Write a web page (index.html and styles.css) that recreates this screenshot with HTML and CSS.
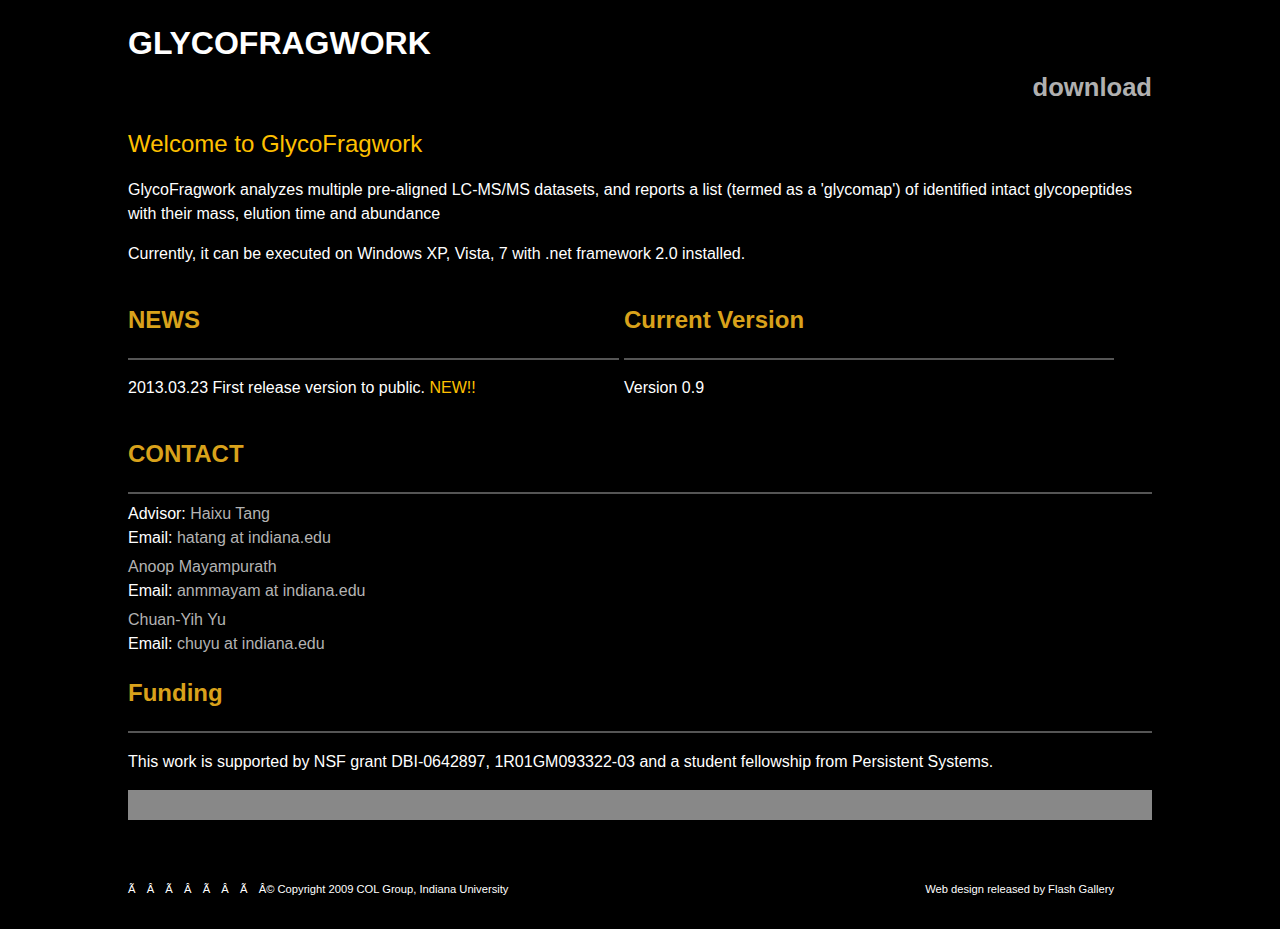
FILE: index.html
```html
<!DOCTYPE html>
<html>
<head>
<meta charset="utf-8">
<title>GlycoFragwork</title>
<link rel="stylesheet" href="styles.css">
</head>
<body>
<div class="page">
  <header class="header">
    <h1 class="site-title">GLYCOFRAGWORK</h1>
    <nav class="nav"><a class="nav-link" href="#">download</a></nav>
  </header>

  <section class="intro">
    <h2 class="welcome">Welcome to GlycoFragwork</h2>
    <p class="text intro-p">GlycoFragwork analyzes multiple pre-aligned LC-MS/MS datasets, and reports a list (termed as a 'glycomap') of identified intact glycopeptides with their mass, elution time and abundance</p>
    <p class="text intro-p">Currently, it can be executed on Windows XP, Vista, 7 with .net framework 2.0 installed.</p>
  </section>

  <div class="columns">
    <section class="col">
      <h3 class="sec-title">NEWS</h3>
      <hr class="rule">
      <p class="text col-p">2013.03.23 First release version to public. <span class="new">NEW!!</span></p>
    </section>
    <section class="col">
      <h3 class="sec-title">Current Version</h3>
      <hr class="rule">
      <p class="text col-p">Version 0.9</p>
    </section>
  </div>

  <section class="contact">
    <h3 class="sec-title">CONTACT</h3>
    <hr class="rule">
    <div class="people">
      <p class="text person">Advisor: <a class="link" href="#">Haixu Tang</a><br>Email: <a class="link" href="#">hatang at indiana.edu</a></p>
      <p class="text person"><a class="link" href="#">Anoop Mayampurath</a><br>Email: <a class="link" href="#">anmmayam at indiana.edu</a></p>
      <p class="text person"><a class="link" href="#">Chuan-Yih Yu</a><br>Email: <a class="link" href="#">chuyu at indiana.edu</a></p>
    </div>
  </section>

  <section class="funding">
    <h3 class="sec-title">Funding</h3>
    <hr class="rule">
    <p class="text funding-p">This work is supported by NSF grant DBI-0642897, 1R01GM093322-03 and a student fellowship from Persistent Systems.</p>
  </section>

  <div class="bar"></div>

  <footer class="footer">
    <span class="foot-left"><span class="junk">Ã Â Ã Â Ã Â Ã </span>Â© Copyright 2009 COL Group, Indiana University</span>
    <span class="foot-right">Web design released by Flash Gallery</span>
  </footer>
</div>
</body>
</html>
```
FILE: styles.css
```css
html, body {
  margin: 0;
  padding: 0;
  background: #000;
}
body {
  font-family: "Liberation Sans", Arial, sans-serif;
  color: #fff;
}
.page {
  width: 1024px;
  margin: 0 auto;
  padding-top: 25px;
  padding-bottom: 30px;
}
.header {
  display: flex;
  flex-direction: column;
}
.site-title {
  margin: 0;
  font-size: 32px;
  line-height: 37px;
  font-weight: bold;
  color: #fff;
}
.nav {
  display: flex;
  justify-content: flex-end;
  margin-top: 10px;
}
.nav-link {
  font-size: 25.6px;
  line-height: 30px;
  font-weight: bold;
  color: #b0b0b0;
  text-decoration: none;
}
.welcome {
  margin: 28px 0 0;
  font-size: 24px;
  line-height: 28px;
  font-weight: normal;
  color: #ffc000;
}
.text {
  font-size: 16px;
  line-height: 24px;
  margin: 0;
}
.intro-p {
  margin-top: 16px;
}
.intro-p:first-of-type {
  margin-top: 20px;
}
.columns {
  display: flex;
  gap: 5px;
  margin-top: 40px;
}
.col {
  width: 491px;
}
.col + .col {
  width: 490px;
}
.sec-title {
  margin: 0;
  font-size: 24px;
  line-height: 28px;
  font-weight: bold;
  color: #d9a21b;
}
.rule {
  margin: 24px 0 0;
  height: 2px;
  border: 0;
  background: #555;
}
.col-p {
  margin-top: 15.5px;
}
.new {
  color: #ffc000;
}
.contact {
  margin-top: 40px;
}
.people {
  margin-top: 8.5px;
  display: flex;
  flex-direction: column;
  gap: 5px;
}
.link {
  color: #b3b3b3;
  text-decoration: none;
}
.funding {
  margin-top: 23px;
}
.funding-p {
  margin-top: 16.5px;
}
.bar {
  margin-top: 16.5px;
  height: 30px;
  background: #888;
}
.footer {
  display: flex;
  justify-content: space-between;
  margin-top: 62px;
  padding-right: 38px;
  font-size: 11.2px;
  line-height: 14px;
}
.junk {
  word-spacing: 8.1px;
}
```
